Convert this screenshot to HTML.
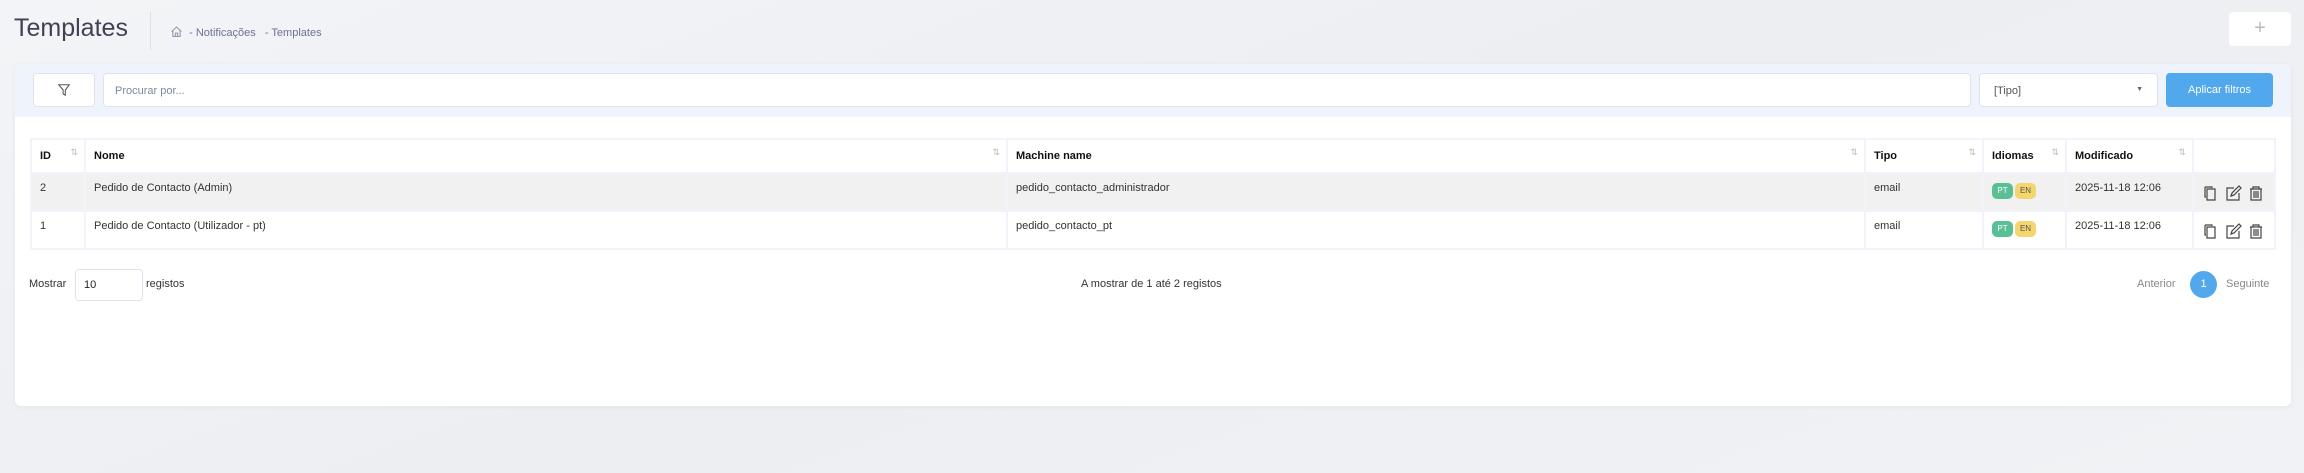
<!DOCTYPE html>
<html><head><meta charset="utf-8"><style>
*{box-sizing:border-box;margin:0;padding:0}
body{width:2304px;height:473px;background:linear-gradient(160deg,#f3f4f7,#eceef2 50%,#f1f2f5);font-family:"Liberation Sans",sans-serif;position:relative;overflow:hidden;color:#222}
.abs{position:absolute}
.title{left:14px;top:14px;font-size:25px;color:#3f4254}
.div{left:150px;top:12px;width:1px;height:38px;background:#dcdfe6}
.bc{left:170px;top:25px;font-size:11px;color:#6c7293}
.plus{left:2229px;top:12px;width:62px;height:34px;background:#fff;border-radius:4px;color:#bbb;font-size:20px;text-align:center;line-height:32px}
.card{left:15px;top:64px;width:2276px;height:342px;background:#fff;border-radius:6px;box-shadow:0 1px 6px rgba(0,0,0,.05)}
.fbar{left:15px;top:64px;width:2276px;height:53px;background:#eef3fc;border-radius:6px 6px 0 0}
.box{background:#fff;border:1px solid #dde3ee;border-radius:4px}
.ph{font-size:11px;color:#7a8aa0}
table{position:absolute;left:30px;top:138px;width:2246px;border-collapse:collapse;font-size:11px}
td,th{border:2px solid #f0f3f9;text-align:left;padding:0 8px;vertical-align:top}
th{height:34px;padding-top:10px;font-weight:bold;color:#111;position:relative}
th .s{position:absolute;right:6px;top:7px;color:#bbb;font-size:9px;font-weight:normal}
td{height:38px;padding-top:8px;color:#333}
tr.g td{background:#f1f1f1}
.b{display:inline-block;width:21px;height:16px;border-radius:5px;font-size:8px;text-align:center;line-height:16px;margin-top:2px;margin-right:2px}
.pt{background:#5bbf95;color:#fff}.en{background:#f5d56d;color:#555}
</style></head><body>
<div class="abs title">Templates</div>
<div class="abs div"></div>
<div class="abs bc"><svg width="13" height="13" viewBox="0 0 16 16" style="vertical-align:-2px" fill="none" stroke="#8a93a8" stroke-width="1.2"><path d="M2 8L8 2.5 14 8M3.5 7v7h9V7M6.5 14v-4h3v4"/></svg>&nbsp; - Notificações &nbsp;&nbsp;- Templates</div>
<div class="abs plus">+</div>
<div class="abs card"></div>
<div class="abs fbar"></div>
<div class="abs box" style="left:33px;top:73px;width:62px;height:34px;text-align:center;padding-top:9px"><svg width="14" height="14" viewBox="0 0 16 16" fill="none" stroke="#555" stroke-width="1.2"><path d="M2 2h12L9.5 8v6L7 12.5V8z"/></svg></div>
<div class="abs box ph" style="left:103px;top:73px;width:1868px;height:34px;padding:11px 11px">Procurar por...</div>
<div class="abs box" style="left:1979px;top:73px;width:179px;height:34px;padding:11px 14px;font-size:11px;color:#555">[Tipo]<span style="position:absolute;right:14px;top:12px;font-size:7px;color:#666">▼</span></div>
<div class="abs" style="left:2166px;top:73px;width:107px;height:34px;background:#52a8ec;border-radius:4px;color:#fff;font-size:11px;text-align:center;line-height:34px">Aplicar filtros</div>
<table>
<tr><th style="width:54px">ID<span class="s">⇅</span></th><th style="width:922px">Nome<span class="s">⇅</span></th><th style="width:858px">Machine name<span class="s">⇅</span></th><th style="width:118px">Tipo<span class="s">⇅</span></th><th style="width:83px">Idiomas<span class="s">⇅</span></th><th style="width:127px">Modificado<span class="s">⇅</span></th><th></th></tr>
<tr class="g"><td>2</td><td>Pedido de Contacto (Admin)</td><td>pedido_contacto_administrador</td><td>email</td><td style="padding-top:7px"><span class="b pt">PT</span><span class="b en">EN</span></td><td>2025-11-18 12:06</td><td style="padding-top:11px"><svg width="64" height="16" viewBox="0 0 64 16" fill="none" stroke="#444" stroke-width="1.2"><path d="M3 2h7v1M3 2v10h1M5 4h8v11H5z"/><path d="M32 3h-7v12h12V8M29 11l1-3 7-7 2 2-7 7z"/><path d="M48 4h12M51 4V2h6v2M49 4v11h10V4M52 6v7M54 6v7M56 6v7"/></svg></td></tr>
<tr><td>1</td><td>Pedido de Contacto (Utilizador - pt)</td><td>pedido_contacto_pt</td><td>email</td><td style="padding-top:7px"><span class="b pt">PT</span><span class="b en">EN</span></td><td>2025-11-18 12:06</td><td style="padding-top:11px"><svg width="64" height="16" viewBox="0 0 64 16" fill="none" stroke="#444" stroke-width="1.2"><path d="M3 2h7v1M3 2v10h1M5 4h8v11H5z"/><path d="M32 3h-7v12h12V8M29 11l1-3 7-7 2 2-7 7z"/><path d="M48 4h12M51 4V2h6v2M49 4v11h10V4M52 6v7M54 6v7M56 6v7"/></svg></td></tr>
</table>
<div class="abs" style="left:29px;top:278px;font-size:11px;color:#333">Mostrar</div>
<div class="abs box" style="left:75px;top:269px;width:68px;height:32px;font-size:11px;padding:9px 8px;border-radius:4px">10</div>
<div class="abs" style="left:146px;top:278px;font-size:11px;color:#333">registos</div>
<div class="abs" style="left:1081px;top:278px;font-size:11px;color:#333">A mostrar de 1 até 2 registos</div>
<div class="abs" style="left:2137px;top:278px;font-size:11px;color:#888">Anterior</div>
<div class="abs" style="left:2190px;top:271px;width:27px;height:27px;border-radius:50%;background:#52a8ec;color:#fff;font-size:11px;text-align:center;line-height:27px">1</div>
<div class="abs" style="left:2226px;top:278px;font-size:11px;color:#888">Seguinte</div>
</body></html>
